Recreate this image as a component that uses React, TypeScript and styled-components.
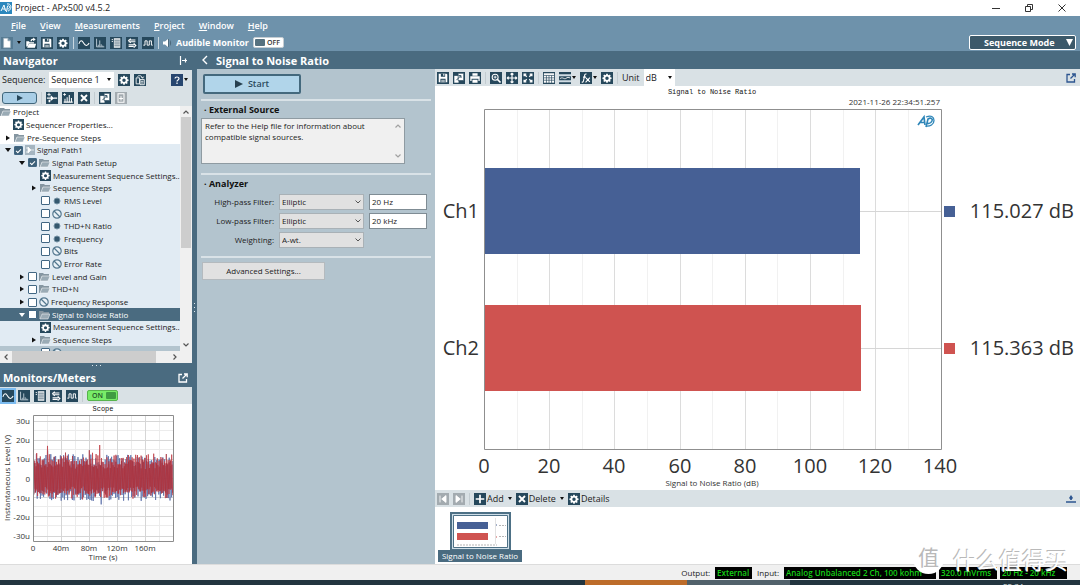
import React from 'react';
import styled, { createGlobalStyle, css } from 'styled-components';

const c = {
  menu: '#6e92ab',
  header: '#4a6b80',
  pale: '#d9e1e5',
  panel: '#b3c4ce',
  tree: '#e1ebf3',
  icon: '#26485c',
  blue: '#466095',
  red: '#cf5350',
};

const GlobalStyle = createGlobalStyle`
  *, *::before, *::after { box-sizing: border-box; }
  body { margin: 0; overflow: hidden; }
  body, button, input, select, textarea {
    font-family: "Open Sans", "Noto Sans", sans-serif;
    font-size: 9px;
    line-height: 12px;
    color: #222;
  }
  button, input, select, textarea { margin: 0; padding: 0; border: 0; border-radius: 0; background: none; }
  button { white-space: nowrap; }
  svg { display: block; flex: none; }
`;

/* ---------- icons ---------- */

type Glyph =
  | 'page' | 'open' | 'save' | 'gear' | 'sine' | 'fft' | 'list' | 'swap' | 'square'
  | 'seqCopy' | 'addStep' | 'addBars' | 'cross' | 'copy' | 'addPage' | 'print' | 'zoom'
  | 'pan' | 'fit' | 'table' | 'graph' | 'fx' | 'plus' | 'first' | 'last';

const gearPath =
  'M6.2 2h1.6l.3 1.3.9.4 1.2-.7 1.1 1.1-.7 1.2.4.9 1.3.3v1.6l-1.3.3-.4.9.7 1.2-1.1 1.1-1.2-.7-.9.4-.3 1.3H6.2l-.3-1.3-.9-.4-1.2.7-1.1-1.1.7-1.2-.4-.9-1.3-.3V6.5l1.3-.3.4-.9-.7-1.2 1.1-1.1 1.2.7.9-.4z';

const glyphs: Record<Glyph, React.ReactNode> = {
  page: <path d="M3 1.500h5l3 3v8H3z M8 1.500v3h3" fill="#fff" stroke="#9fb2bf" strokeWidth=".7" />,
  open: <g fill="#fff"><path d="M1.500 5h3l1 1h5v1.500H4.500L3 11H1.500z" /><path d="M4.500 8H13l-1.500 4.500H2.500z" /><path d="M6.500 5c0-2.500 1-3 3-3V.5l3 2.300-3 2.200V3.500C8.500 3.500 8 4 8 5z" /></g>,
  save: <g><path d="M2 2h9l1 1v9H2z" fill="#fff" /><path d="M4.500 2h5v3.500h-5z M4 8h6v4H4z" fill={c.icon} /><path d="M7.300 2h1.300v2.500H7.300z M5.300 9h1.200v3H5.300z M7.500 9h1.200v3H7.500z" fill="#fff" /></g>,
  gear: <path d={gearPath + 'M7 5.300a2 2 0 1 0 0 4 2 2 0 0 0 0-4z'} fill="#fff" fillRule="evenodd" />,
  sine: <path d="M1 8C2.500 3.500 4.500 3.500 6.500 7s4.500 4 6.500 0" fill="none" stroke="#fff" strokeWidth="1.200" />,
  fft: <path d="M3 2v9.500h9 M5 11V9 M6.700 11V4 M8.400 11V8.500 M10.200 11V10" fill="none" stroke="#dbe6ee" strokeWidth=".9" />,
  list: <g><path d="M4.500 1.500h7.500v11H4.500z" fill="#fff" /><path d="M5 3.700h6.500M5 5.900h6.500M5 8.100h6.500M5 10.300h6.500" stroke={c.icon} strokeWidth=".9" /><path d="M2 3h1.500M2 5.200h1.500" stroke="#fff" /></g>,
  swap: <path d="M3 3.500h8M3 5.500h8M3 9h8M3 11h6 M5.500 2L3 4.500l2.500 2.300M9 7.500l2.500 2.500L9 12.300" fill="none" stroke="#fff" strokeWidth="1.300" />,
  square: <path d="M1.500 9.500h2v-5H6v5h2.500v-5H11v5h1.500" fill="none" stroke="#fff" strokeWidth="1.100" />,
  seqCopy: <g fill="none" stroke="#fff" strokeWidth="1"><path d="M2.500 4.500h4v7h-4z M7 6.500h5v6H7z M8 8.500h3 M8 10.500h3" /><path d="M4 3c2-2 5-1 6 1.500M8.500 3.500L10 5l1.300-2" /></g>,
  addStep: <g fill="#fff"><path d="M1.500 2.500h4v1h-4zM3 1h1v4H3zM1 6.500h5V8H1z" /><path d="M5.500 3.800L9.500 7.200l-4 3.400zM9 6.500h4V8H9zM3 9h2v3H3z" /></g>,
  addBars: <path d="M1.500 3h3M3 1.500v3M3.500 11V8M6 11V6M8.500 11V3.500M11 11V7M2 11.800h10.500" fill="none" stroke="#fff" strokeWidth="1.200" />,
  cross: <path d="M3.500 3.500l7 7M10.500 3.500l-7 7" fill="none" stroke="#fff" strokeWidth="2.200" />,
  copy: <g><path d="M1.500 4.500h5v8h-5z" fill="#fff" /><path d="M6 1.500h6.500v8.500H6z" fill="#fff" stroke={c.icon} strokeWidth=".8" /><path d="M4 9.500L9 4.500M6.500 4.200h2.800V7" fill="none" stroke={c.icon} strokeWidth="1.100" /></g>,
  addPage: <path d="M3.500 2h7v10h-7zM7 5v5M4.800 7.500h4.500" fill="none" stroke="#fff" strokeWidth="1.200" />,
  print: <path d="M4 1.500h6v3H4zM1.500 5h11v5.500H11V8H3v2.500H1.500zM4 9h6v3.500H4z" fill="#fff" />,
  zoom: <g fill="none" stroke="#fff"><circle cx="6" cy="6" r="3.500" strokeWidth="1.200" /><path d="M8.500 8.500L12.300 12.300" strokeWidth="1.900" /><path d="M4.300 6h3.400M6 4.300v3.400" /></g>,
  pan: <path d="M7 1.500v11M1.500 7h11M5.300 3L7 1.500 8.700 3M5.300 11L7 12.500 8.700 11M3 5.300L1.500 7 3 8.700M11 5.300L12.500 7 11 8.700" fill="none" stroke="#fff" strokeWidth="1.400" />,
  fit: <path d="M2.500 5V2.500H5M2.500 2.500l3 3M9 2.500h2.500V5M11.500 2.500l-3 3M2.500 9v2.500H5M2.500 11.500l3-3M9 11.500h2.500V9M11.500 11.500l-3-3" fill="none" stroke="#fff" strokeWidth="1.500" />,
  table: <g><path d="M1 1.500h12v11H1z" fill="#fff" /><path d="M1 4h12M1 6.800h12M1 9.600h12M4 4v9M7 4v9M10 4v9" stroke={c.icon} strokeWidth=".8" /></g>,
  graph: <g><path d="M0 2.500h14v2.500H0zM0 9.500h14V12H0z" fill="#cfdbe3" /><path d="M1 8c3-3 5 1 7-.5s3-1.500 5-.5" fill="none" stroke="#fff" /></g>,
  fx: <path d="M7.500 2.500C6 2 5.500 3 5.200 5L4 10.500c-.3 1.300-1 1.500-2 1.200M3.500 6H7M7 7l4.500 4.500M11.500 6.500L6.500 12" fill="none" stroke="#fff" strokeWidth="1.300" />,
  plus: <path d="M7 2v10M2 7h10" fill="none" stroke="#fff" strokeWidth="2" />,
  first: <path d="M3.500 3v8M10.500 3v8L5.500 7z" fill="#fff" stroke="#fff" />,
  last: <path d="M10.500 3v8M3.500 3v8l5-4z" fill="#fff" stroke="#fff" />,
};

const IconButton = styled.button<{ $bg?: string; $ring?: boolean }>`
  display: grid;
  place-items: center;
  flex: none;
  width: 12px;
  height: 12px;
  background: ${p => p.$bg ?? c.icon};
  ${p => p.$ring && css`outline: 2px solid #7dbcf0;`}
`;

const Icon = ({ g, label, bg, ring }: { g: Glyph; label: string; bg?: string; ring?: boolean }) => (
  <IconButton type="button" aria-label={label} $bg={bg} $ring={ring}>
    <svg width="12" height="12" viewBox="0 0 14 14">{glyphs[g]}</svg>
  </IconButton>
);

const Caret = ({ color = '#111' }: { color?: string }) => (
  <svg width="4" height="3" viewBox="0 0 4 3"><path d="M0 0h4L2 3z" fill={color} /></svg>
);

const Divider = styled.span<{ $color?: string }>`
  flex: none;
  width: 1px;
  height: 12px;
  background: ${p => p.$color ?? '#c3ccd1'};
`;

const Chevron = styled.svg`
  position: absolute;
  right: 3px;
  top: 50%;
  margin-top: -2px;
  pointer-events: none;
`;

/* ---------- page frame ---------- */

const Page = styled.div`
  position: relative;
  display: flex;
  flex-direction: column;
  height: 100vh;
  background: #fff;
  overflow: hidden;
`;

const TitleBar = styled.header`
  display: flex;
  align-items: center;
  justify-content: space-between;
  height: 16px;
  padding-right: 13px;
`;

const AppTitle = styled.div`
  display: flex;
  align-items: center;
  gap: 3px;
`;

const WindowControls = styled.div`
  display: flex;
  gap: 22px;
`;

const WindowButton = styled.button`
  display: grid;
  place-items: center;
  width: 11px;
  height: 12px;
`;

const MenuBar = styled.nav`
  display: flex;
  align-items: center;
  gap: 14px;
  height: 18px;
  padding: 2px 11px 0;
  background: ${c.menu};
`;

const MenuLink = styled.a`
  color: #fff;
  font-weight: 600;
  text-decoration: none;
  &::first-letter { text-decoration: underline; }
`;

const MainToolbar = styled.div`
  display: flex;
  align-items: center;
  justify-content: space-between;
  height: 17px;
  padding: 0 4px 0 1px;
  background: ${c.menu};
`;

const Tools = styled.div<{ $gap?: number }>`
  display: flex;
  align-items: center;
  gap: ${p => p.$gap ?? 4}px;
`;

const Monitor = styled.span`
  color: #fff;
  font-weight: 700;
`;

const Toggle = styled.button<{ $on?: boolean }>`
  display: flex;
  flex-direction: ${p => (p.$on ? 'row-reverse' : 'row')};
  align-items: center;
  justify-content: space-between;
  width: 31px;
  height: 11px;
  padding: 0 ${p => (p.$on ? 1 : 3)}px 0 ${p => (p.$on ? 4 : 1)}px;
  border: 1px solid ${p => (p.$on ? '#57b34d' : '#c5cdd2')};
  border-radius: 2px;
  background: ${p => (p.$on ? '#78ec68' : '#fff')};
  color: ${p => (p.$on ? '#24542a' : '#333')};
  font-size: 7px;
  font-weight: 600;
  line-height: 9px;
  &::before {
    content: '';
    width: 10px;
    height: 7px;
    border-radius: 1px;
    background: ${p => (p.$on ? '#3f9c42' : '#56717f')};
  }
`;

const ModeButton = styled.button`
  display: flex;
  align-items: center;
  justify-content: space-between;
  width: 107px;
  height: 15px;
  padding: 0 2px 0 14px;
  border: 1px solid #fff;
  border-radius: 2px;
  background: #3c596a;
  color: #fff;
  font-weight: 700;
`;

const Body = styled.main`
  display: grid;
  grid-template-columns: 197px minmax(0, 1fr);
  flex: 1;
  min-height: 0;
  background: ${c.header};
`;

const Side = styled.aside`
  display: grid;
  grid-template-columns: minmax(0, 1fr) 5px;
  min-height: 0;
`;

const SideColumn = styled.div`
  display: flex;
  flex-direction: column;
  min-height: 0;
`;

const Grip = styled.div<{ $across?: boolean }>`
  display: flex;
  flex-direction: ${p => (p.$across ? 'row' : 'column')};
  align-items: center;
  justify-content: center;
  gap: 3px;
  flex: none;
  min-height: 5px;
  background: ${c.header};
  & > i { width: 1px; height: 1px; background: #dfe8ee; }
`;

const PaneHeader = styled.h2`
  display: flex;
  align-items: center;
  justify-content: space-between;
  flex: none;
  height: 19px;
  margin: 0;
  padding: 0 4px 0 3px;
  background: ${c.header};
  color: #fff;
  font-size: 11px;
  font-weight: 700;
  line-height: 15px;
`;

const SequenceRow = styled.div<{ $short?: boolean }>`
  display: flex;
  align-items: center;
  gap: 4px;
  flex: none;
  height: ${p => (p.$short ? 17 : 19)}px;
  padding: 0 4px 0 2px;
  background: ${c.pale};
`;

const SequencePick = styled.span`
  position: relative;
  width: 65px;
  & > select {
    display: block;
    width: 100%;
    height: 16px;
    padding-left: 2px;
    appearance: none;
    background: #fff;
  }
`;

const Push = styled.span`
  margin-left: auto;
`;

const RunButton = styled.button`
  display: grid;
  place-items: center;
  width: 35px;
  height: 12px;
  border: 1px solid #41677c;
  border-radius: 3px;
  background: #a9cee6;
`;

/* ---------- tree ---------- */

const TreeFrame = styled.div`
  display: grid;
  grid-template-columns: minmax(0, 1fr) 12px;
  flex: 1;
  min-height: 0;
  background: #fff;
`;

const TreeView = styled.div`
  min-height: 0;
  overflow: hidden;
`;

const TreeList = styled.ul`
  display: grid;
  grid-template-rows: repeat(20, minmax(0, 1fr));
  height: 253px;
  margin: 0;
  padding: 0;
  list-style: none;
  font-size: 8px;
`;

const TreeItem = styled.li<{ $indent: number; $tone: 'plain' | 'tint' | 'selected' | 'group' }>`
  display: flex;
  align-items: center;
  gap: 2px;
  min-width: 0;
  padding-left: ${p => p.$indent}px;
  white-space: nowrap;
  background: ${p => ({ plain: '#fff', tint: c.tree, selected: c.header, group: c.panel })[p.$tone]};
  color: ${p => (p.$tone === 'selected' ? '#fff' : '#222')};
`;

const Check = styled.input`
  appearance: none;
  display: grid;
  place-items: center;
  flex: none;
  width: 9px;
  height: 9px;
  border: 1px solid #426783;
  border-radius: 1px;
  background: #fff;
  &:checked { background: #3d6078; }
  &:checked::after {
    content: '';
    width: 5px;
    height: 3px;
    border: solid #fff;
    border-width: 0 0 1px 1px;
    transform: rotate(-45deg);
  }
`;

const Arrow = styled.button`
  display: grid;
  place-items: center;
  flex: none;
  width: 8px;
  height: 8px;
`;

const Folder = () => (
  <svg width="11" height="10" viewBox="0 0 11 10">
    <path d="M0 1h4l1 1h5v2H3L1 9H0z" fill="#8596a1" />
    <path d="M3 4h8L9 9H1z" fill="#9aabb5" stroke="#fff" strokeWidth=".5" />
  </svg>
);
const Dot = () => (
  <svg width="10" height="8" viewBox="0 0 10 8"><circle cx="5" cy="4" r="3" fill="#35586e" stroke="#7793a5" /></svg>
);
const Ban = () => (
  <svg width="10" height="10" viewBox="0 0 10 10">
    <circle cx="5" cy="5" r="4.200" fill="#e9f1f7" stroke="#54788f" strokeWidth="1.200" />
    <path d="M2 2l6 6" stroke="#54788f" strokeWidth="1.200" />
  </svg>
);
const GearTile = () => (
  <svg width="11" height="11" viewBox="0 0 14 14"><path d="M0 0h14v14H0z" fill={c.icon} />{glyphs.gear}</svg>
);
const PathTile = () => (
  <svg width="10" height="10" viewBox="0 0 10 10">
    <path d="M0 0h10v10H0z" fill="#a5b5c0" /><path d="M1 3h2M1 7h2M3 2v6l3-3zM6 5h3" fill="#fff" stroke="#fff" strokeWidth=".7" />
  </svg>
);

type Kind = 'folder' | 'dot' | 'ban' | 'gear' | 'path';
const kinds: Record<Kind, React.ReactNode> = {
  folder: <Folder />, dot: <Dot />, ban: <Ban />, gear: <GearTile />, path: <PathTile />,
};

interface Node {
  text: string;
  indent: number;
  kind: Kind;
  arrow?: 'open' | 'shut';
  check?: boolean;
  tone?: 'plain' | 'tint' | 'selected' | 'group';
}

const nodes: Node[] = [
  { text: 'Project', indent: 0, kind: 'folder', tone: 'plain' },
  { text: 'Sequencer Properties...', indent: 13, kind: 'gear', tone: 'plain' },
  { text: 'Pre-Sequence Steps', indent: 4, kind: 'folder', arrow: 'shut', tone: 'plain' },
  { text: 'Signal Path1', indent: 4, kind: 'path', arrow: 'open', check: true },
  { text: 'Signal Path Setup', indent: 18, kind: 'folder', arrow: 'open', check: true },
  { text: 'Measurement Sequence Settings..', indent: 40, kind: 'gear' },
  { text: 'Sequence Steps', indent: 30, kind: 'folder', arrow: 'shut' },
  { text: 'RMS Level', indent: 41, kind: 'dot', check: false },
  { text: 'Gain', indent: 41, kind: 'ban', check: false },
  { text: 'THD+N Ratio', indent: 41, kind: 'dot', check: false },
  { text: 'Frequency', indent: 41, kind: 'dot', check: false },
  { text: 'Bits', indent: 41, kind: 'ban', check: false },
  { text: 'Error Rate', indent: 41, kind: 'ban', check: false },
  { text: 'Level and Gain', indent: 18, kind: 'folder', arrow: 'shut', check: false },
  { text: 'THD+N', indent: 18, kind: 'folder', arrow: 'shut', check: false },
  { text: 'Frequency Response', indent: 18, kind: 'ban', arrow: 'shut', check: false },
  { text: 'Signal to Noise Ratio', indent: 18, kind: 'folder', arrow: 'open', check: false, tone: 'selected' },
  { text: 'Measurement Sequence Settings..', indent: 40, kind: 'gear' },
  { text: 'Sequence Steps', indent: 30, kind: 'folder', arrow: 'shut' },
  { text: 'Signal to Noise Ratio', indent: 41, kind: 'ban', check: false, tone: 'group' },
];

const TreeRow = ({ node, id }: { node: Node; id: string }) => {
  const ink = node.tone === 'selected' ? '#fff' : '#111';
  return (
    <TreeItem $indent={node.indent} $tone={node.tone ?? 'tint'}>
      {node.arrow && (
        <Arrow type="button" aria-label={`Toggle ${node.text}`}>
          <svg width="6" height="6" viewBox="0 0 6 6">
            <path d={node.arrow === 'open' ? 'M0 1h6L3 5z' : 'M1 0.500v5l4-2.500z'} fill={ink} />
          </svg>
        </Arrow>
      )}
      {node.check !== undefined && <Check id={id} type="checkbox" defaultChecked={node.check} />}
      {kinds[node.kind]}
      {node.check !== undefined ? <label htmlFor={id}>{node.text}</label> : <span>{node.text}</span>}
    </TreeItem>
  );
};

const ScrollTrack = styled.div<{ $across?: boolean }>`
  display: flex;
  flex-direction: ${p => (p.$across ? 'row' : 'column')};
  align-items: center;
  justify-content: space-between;
  flex: none;
  min-height: 12px;
  padding: ${p => (p.$across ? '0 14px 0 3px' : '3px 0')};
  background: #f0f0f0;
`;

const Thumb = styled.div<{ $across?: boolean }>`
  align-self: stretch;
  flex: ${p => (p.$across ? '0 1 144px' : '0 1 131px')};
  margin: ${p => (p.$across ? '0 auto 0 3px' : '2px 1px auto')};
  background: #cdcdcd;
`;

const Tip = ({ d }: { d: string }) => (
  <svg width="6" height="6" viewBox="0 0 6 6"><path d={d} fill="none" stroke="#555" strokeWidth="1.200" /></svg>
);
const tipUp = 'M0.500 4.500L3 2l2.500 2.500';
const tipDown = 'M0.500 1.500L3 4l2.500-2.500';
const tipLeft = 'M4.500 .5L2 3l2.500 2.500';
const tipRight = 'M1.500 .5L4 3 1.500 5.500';

/* ---------- scope ---------- */

const MeterTools = styled.div`
  display: flex;
  align-items: center;
  gap: 4px;
  flex: none;
  height: 17px;
  padding: 0 2px;
  background: ${c.pale};
`;

const ScopeFrame = styled.div`
  flex: none;
  height: 160px;
  background: #fff;
`;

const ChartSvg = styled.svg`
  width: 100%;
  height: 100%;
  text { font-family: "Open Sans", "Noto Sans", sans-serif; fill: #333; }
  .mono { font-family: "Liberation Mono", monospace; font-size: 7px; fill: #111; }
`;

const noise = (seed: number, up: number, down: number, step: number) => {
  let s = seed;
  const rnd = () => {
    s = (s * 16807) % 2147483647;
    return s / 2147483647;
  };
  for (let i = 0; i < 5; i++) rnd();
  let d = '';
  for (let i = 0; i * step <= 139; i++) {
    const spike = rnd() > 0.93 ? 12 * rnd() : 0;
    const reach = 0.5 + 0.5 * rnd();
    const y = i % 2 ? 74 - reach * up - spike : 74 + reach * down + spike * 0.7;
    d += `${i ? 'L' : 'M'}${(34 + i * step).toFixed(1)} ${y.toFixed(1)}`;
  }
  return d;
};

const Scope = () => (
  <ChartSvg viewBox="0 0 192 160" role="img" aria-label="Scope">
    <text x="103" y="7" textAnchor="middle" className="mono">Scope</text>
    <g stroke="#ececec">
      {[47.5, 75.5, 103.5, 131.5, 159.5].map(x => <path key={x} d={`M${x} 12v126`} />)}
      {[26.5, 45.5, 64.5, 83.5, 102.5, 121.5].map(y => <path key={y} d={`M33 ${y}h140`} />)}
    </g>
    <g stroke="#d6d6d6">
      {[61.5, 89.5, 117.5, 145.5].map(x => <path key={x} d={`M${x} 12v126`} />)}
      {[17.5, 36.5, 55.5, 74.5, 93.5, 112.5, 132.5].map(y => <path key={y} d={`M33 ${y}h140`} />)}
    </g>
    <path d={noise(71, 24, 23, 0.8)} fill="none" stroke="#5a6fa8" strokeWidth=".8" />
    <path d={noise(1234, 24, 21, 0.9)} fill="none" stroke="#c2424a" strokeWidth=".8" />
    <path d={noise(998, 18, 17, 0.7)} fill="none" stroke="#a8303e" strokeWidth=".7" />
    <path d="M33.500 11.500h140v126h-140z" fill="none" stroke="#8c8c8c" />
    <g fontSize="8" textAnchor="end">
      {['30u', '20u', '10u', '0', '-10u', '-20u', '-30u'].map((t, i) => (
        <text key={t} x="30" y={20 + Math.round(i * 19.2)}>{t}</text>
      ))}
    </g>
    <g fontSize="8" textAnchor="middle">
      {['0', '40m', '80m', '120m', '160m'].map((t, i) => <text key={t} x={33 + i * 28} y="147">{t}</text>)}
      <text x="103" y="156">Time (s)</text>
      <text transform="translate(10 74) rotate(-90)">Instantaneous Level (V)</text>
    </g>
  </ChartSvg>
);

/* ---------- measurement ---------- */

const Work = styled.section`
  display: flex;
  flex-direction: column;
  min-width: 0;
  min-height: 0;
`;

const WorkHeader = styled(PaneHeader)`
  justify-content: flex-start;
  gap: 8px;
  padding-left: 5px;
  height: 18px;
`;

const WorkColumns = styled.div`
  display: grid;
  grid-template-columns: 238px minmax(0, 1fr);
  flex: 1;
  min-height: 0;
`;

const Settings = styled.form`
  display: flex;
  flex-direction: column;
  align-items: stretch;
  padding: 5px 4px 0 4px;
  background: ${c.panel};
`;

const StartButton = styled.button`
  display: flex;
  align-items: center;
  justify-content: center;
  gap: 5px;
  width: 98px;
  height: 20px;
  margin: 0 0 5px 2px;
  border: 2px solid #44697d;
  border-radius: 2px;
  background: #b1d5ea;
  color: #2b4a5d;
  font-weight: 600;
`;

const Group = styled.fieldset<{ $tail: number }>`
  min-width: 0;
  margin: 0;
  padding: 0 0 ${p => p.$tail}px;
  border: 0;
  border-top: 2px solid #d9e2e7;
`;

const GroupTitle = styled.h3`
  margin: 0;
  padding: 2px 0 2px 3px;
  color: #111;
  font-size: 9px;
  font-weight: 700;
  line-height: 13px;
`;

const Note = styled.div`
  display: flex;
  width: 204px;
  height: 46px;
  border: 1px solid #8f9ba2;
  background: #f0f0f0;
  & > textarea {
    flex: 1;
    padding: 1px 3px;
    resize: none;
    overflow: hidden;
    font-size: 8px;
    line-height: 11px;
  }
`;

const NoteScroll = styled.div`
  display: flex;
  flex-direction: column;
  align-items: center;
  justify-content: space-between;
  width: 13px;
  padding: 4px 0;
  opacity: 0.5;
`;

const Field = styled.div`
  display: grid;
  grid-template-columns: 73px 85px 58px;
  align-items: center;
  column-gap: 5px;
  height: 19px;
  & > label { text-align: right; font-size: 8px; }
`;

const Pick = styled.span`
  position: relative;
  & > select {
    display: block;
    width: 100%;
    height: 16px;
    padding-left: 2px;
    appearance: none;
    border: 1px solid #a9b1b6;
    background: #e1e1e1;
    font-size: 8px;
  }
`;

const TextField = styled.input`
  width: 100%;
  height: 16px;
  padding: 0 2px;
  border: 1px solid #7f8c94;
  background: #fff;
  font-size: 8px;
`;

const Advanced = styled.button`
  width: 123px;
  height: 18px;
  margin: 4px 0 0 1px;
  border: 1px solid #b4babe;
  background: #e1e1e1;
  font-size: 8px;
`;

const Results = styled.div`
  display: flex;
  flex-direction: column;
  min-width: 0;
  min-height: 0;
  background: #fff;
`;

const ResultTools = styled.div`
  display: flex;
  align-items: center;
  gap: 4px;
  flex: none;
  height: 17px;
  padding: 0 4px 0 2px;
  background: ${c.pale};
`;

const UnitPick = styled.span`
  position: relative;
  width: 31px;
  height: 17px;
  & > select {
    display: block;
    width: 100%;
    height: 17px;
    padding-left: 2px;
    appearance: none;
    background: #fff;
  }
`;

const ChartFrame = styled.div`
  flex: 1;
  min-height: 0;
`;

const LabelButton = styled.button`
  display: flex;
  align-items: center;
`;

const Thumbs = styled.div`
  flex: none;
  height: 57px;
  padding: 5px 3px 0;
`;

const ThumbCard = styled.figure`
  display: flex;
  flex-direction: column;
  align-items: center;
  width: 84px;
  margin: 0;
  & > figcaption {
    width: 100%;
    background: ${c.header};
    color: #fff;
    font-size: 8px;
    text-align: center;
    white-space: nowrap;
  }
`;

const ThumbFrame = styled.div`
  padding: 1px;
  border: 2px solid #4d7085;
  border-bottom-width: 1px;
  background: #cfdfe9;
`;

const bars = [
  { name: 'Ch1', value: '115.027 dB', y: 82, width: 375, color: c.blue },
  { name: 'Ch2', value: '115.363 dB', y: 219, width: 376, color: c.red },
];

const SnrChart = () => (
  <ChartSvg viewBox="-1 0 645 404" role="img" aria-label="Signal to Noise Ratio">
    <text x="276" y="8" textAnchor="middle" className="mono">Signal to Noise Ratio</text>
    <text x="504" y="19" textAnchor="end" fontSize="8">2021-11-26 22:34:51.257</text>
    <g strokeWidth="1">
      {[1, 2, 3, 4, 5, 6, 7, 8, 9, 10, 11, 12, 13].map(i => (
        <path key={i} d={`M${Math.round(48 + i * 32.6) + 0.5} 24v339`} stroke={i % 2 ? '#f1f1f1' : '#dcdcdc'} />
      ))}
      <path d="M49 125.500h456M49 262.500h456" stroke="#d6d6d6" />
    </g>
    {bars.map(b => (
      <g key={b.name}>
        <rect x="49" y={b.y} width={b.width} height="86" fill={b.color} />
        <rect x="508" y={b.y + 38} width="11" height="11" fill={b.color} />
        <text x="43" y={b.y + 50} textAnchor="end" fontSize="20">{b.name}</text>
        <text x="638" y={b.y + 50} textAnchor="end" fontSize="20">{b.value}</text>
      </g>
    ))}
    <path d="M48.500 23.500h457v340h-457z" fill="none" stroke="#8f8f8f" />
    <g fontSize="20" textAnchor="middle">
      {[0, 20, 40, 60, 80, 100, 120, 140].map(v => (
        <text key={v} x={48 + Math.round(v * 3.26)} y="387">{v}</text>
      ))}
    </g>
    <text x="276" y="400" textAnchor="middle" fontSize="8">Signal to Noise Ratio (dB)</text>
    <g fill="none" stroke="#2f86b8">
      <path d="M482 39l6-8 1 8M484 36.500h5" strokeWidth="1.700" />
      <path d="M490 41l2-8c3-2 5 0 4 2s-3 3-5 2" strokeWidth="1.600" />
      <path d="M490 31c5-2 8-.5 8 3.500s-4 6-8 5.500" strokeWidth="1.300" />
    </g>
  </ChartSvg>
);

const Popout = ({ color = '#fff' }: { color?: string }) => (
  <svg width="10" height="10" viewBox="0 0 10 10">
    <path d="M4 1.500H1v7.500h7.500V6M6 1h3.200v3.200M9 1L4.500 5.500" fill="none" stroke={color} strokeWidth="1.300" />
  </svg>
);

/* ---------- status ---------- */

const StatusBar = styled.footer`
  display: flex;
  align-items: center;
  justify-content: flex-end;
  gap: 3px;
  flex: none;
  height: 16px;
  padding-right: 13px;
  border-top: 1px solid #dcdcdc;
  background: #f0f0f0;
  white-space: nowrap;
`;

const StatusName = styled.span`
  margin: 0 2px;
  font-size: 8px;
`;

const Readout = styled.output<{ $width: number }>`
  min-width: ${p => p.$width}px;
  padding: 0 2px;
  background: #000;
  color: #16d016;
  font-size: 8px;
  font-weight: 600;
`;

const Taskbar = styled.div`
  display: grid;
  grid-template-columns: 585fr 102fr 103fr 213fr 77fr;
  flex: none;
  height: 5px;
  overflow: hidden;
  background: #22353f;
  color: #dfe5e8;
  font-size: 8px;
  & > :nth-child(2) { background: #bd6c2a; }
  & > :nth-child(3) { background: #52626b; }
`;

const Watermark = styled.div`
  position: absolute;
  right: 12px;
  bottom: 11px;
  display: flex;
  align-items: center;
  gap: 9px;
  color: #fff;
  font-family: "Noto Sans CJK SC", sans-serif;
  font-size: 23px;
  line-height: 30px;
  text-shadow: -1px -1px 0 #b9b9b9;
`;

const Seal = styled.span`
  display: grid;
  place-items: start center;
  width: 31px;
  height: 31px;
  border-radius: 50%;
  background: #fff;
  color: #b9b9b9;
  font-size: 21px;
  line-height: 26px;
  text-shadow: none;
`;

const meterIcons: [Glyph, string][] = [
  ['sine', 'Scope'], ['fft', 'FFT'], ['list', 'Meters'], ['swap', 'Transfer'], ['square', 'Digital'],
];

export default function App() {
  return (
    <Page>
      <GlobalStyle />
      <TitleBar>
        <AppTitle>
          <svg width="12" height="12" viewBox="0 0 12 12">
            <path d="M0 0h12v12H0z" fill="#2b87bd" />
            <path d="M1 9l3-6 1.500 6M2.500 7h3M6.500 10l1-6c3-1 3 3 0 3M7 2c5-1 5 6 1 7" fill="none" stroke="#fff" />
          </svg>
          <span>Project - APx500 v4.5.2</span>
        </AppTitle>
        <WindowControls>
          <WindowButton type="button" aria-label="Minimize">
            <svg width="8" height="8"><path d="M0 4.500h8" stroke="#333" /></svg>
          </WindowButton>
          <WindowButton type="button" aria-label="Restore">
            <svg width="8" height="8"><path d="M.5 2.500h5v5h-5zM2.500 2.500v-2h5v5h-2" fill="none" stroke="#333" /></svg>
          </WindowButton>
          <WindowButton type="button" aria-label="Close">
            <svg width="8" height="8"><path d="M.5 .5l7 7M7.500 .5l-7 7" stroke="#333" /></svg>
          </WindowButton>
        </WindowControls>
      </TitleBar>
      <MenuBar>
        {['File', 'View', 'Measurements', 'Project', 'Window', 'Help'].map(m => (
          <MenuLink key={m} href={`#${m}`}>{m}</MenuLink>
        ))}
      </MenuBar>
      <MainToolbar>
        <Tools>
          <Icon g="page" label="New" bg="#557a92" />
          <Caret />
          <Icon g="open" label="Open" />
          <Icon g="save" label="Save" />
          <Icon g="gear" label="Settings" />
          <Divider $color="#c9d7e0" />
          {meterIcons.map(([g, label]) => <Icon key={g} g={g} label={label} />)}
          <Divider $color="#c9d7e0" />
          <svg width="9" height="10" viewBox="0 0 9 10">
            <path d="M0 3.500h2L5 1v8L2 6.500H0z" fill="#fff" /><path d="M5 1l1 0v8H5zM7 2c1.500 2 1.500 4 0 6" fill="#4d697b" />
          </svg>
          <Monitor>Audible Monitor</Monitor>
          <Toggle type="button" aria-pressed="false">OFF</Toggle>
        </Tools>
        <ModeButton type="button">
          Sequence Mode
          <svg width="7" height="7"><path d="M0 0h7L3.500 7z" fill="#fff" /></svg>
        </ModeButton>
      </MainToolbar>
      <Body>
        <Side>
          <SideColumn>
            <PaneHeader>
              Navigator
              <svg width="9" height="9" viewBox="0 0 9 9">
                <path d="M1.500 0v9M3 4.500h5M6.500 2.500v4" stroke="#fff" strokeWidth="1.200" fill="none" />
              </svg>
            </PaneHeader>
            <SequenceRow>
              <label htmlFor="sequence">Sequence:</label>
              <SequencePick>
                <select id="sequence"><option>Sequence 1</option></select>
                <Chevron width="4" height="3"><path d="M0 0h4L2 3z" fill="#111" /></Chevron>
              </SequencePick>
              <Icon g="gear" label="Sequence settings" />
              <Icon g="seqCopy" label="Copy sequence" />
              <Push />
              <Tools $gap={1}>
                <IconButton type="button" aria-label="Help" $bg="#27466f">
                  <svg width="10" height="10" viewBox="0 0 10 10">
                    <path d="M3 3.500C3 1.500 7 1.500 7 3.500 7 5 5 4.800 5 6.500M5 7.500V9" fill="none" stroke="#fff" strokeWidth="1.200" />
                  </svg>
                </IconButton>
                <Caret />
              </Tools>
            </SequenceRow>
            <SequenceRow $short>
              <RunButton type="button" aria-label="Run">
                <svg width="6" height="6"><path d="M0 0v6l6-3z" fill="#27475a" /></svg>
              </RunButton>
              <Divider />
              <Icon g="addStep" label="Add step" />
              <Icon g="addBars" label="Add measurement" />
              <Icon g="cross" label="Remove" />
              <Divider />
              <Icon g="copy" label="Copy" />
              <Icon g="addPage" label="Paste" bg="#a3abb0" />
            </SequenceRow>
            <TreeFrame>
              <TreeView>
                <TreeList>
                  {nodes.map((n, i) => <TreeRow key={i} id={`node-${i}`} node={n} />)}
                </TreeList>
              </TreeView>
              <ScrollTrack><Tip d={tipUp} /><Thumb /><Tip d={tipDown} /></ScrollTrack>
            </TreeFrame>
            <ScrollTrack $across><Tip d={tipLeft} /><Thumb $across /><Tip d={tipRight} /></ScrollTrack>
            <Grip $across><i /><i /><i /></Grip>
            <PaneHeader>Monitors/Meters<Popout /></PaneHeader>
            <MeterTools>
              {meterIcons.map(([g, label], i) => <Icon key={g} g={g} label={label} ring={i === 0} />)}
              <Divider />
              <Toggle type="button" aria-pressed="true" $on>ON</Toggle>
            </MeterTools>
            <ScopeFrame><Scope /></ScopeFrame>
          </SideColumn>
          <Grip><i /><i /><i /></Grip>
        </Side>
        <Work>
          <WorkHeader>
            <svg width="6" height="10" viewBox="0 0 6 10"><path d="M5 1L1 5l4 4" fill="none" stroke="#fff" strokeWidth="1.400" /></svg>
            Signal to Noise Ratio
          </WorkHeader>
          <WorkColumns>
            <Settings onSubmit={e => e.preventDefault()}>
              <StartButton type="button">
                <svg width="8" height="8"><path d="M0 0v8l8-4z" fill="#27404f" /></svg>
                Start
              </StartButton>
              <Group $tail={9}>
                <GroupTitle>· External Source</GroupTitle>
                <Note>
                  <textarea
                    readOnly
                    aria-label="External Source"
                    value={'Refer to the Help file for information about\ncompatible signal sources.'}
                  />
                  <NoteScroll><Tip d={tipUp} /><Tip d={tipDown} /></NoteScroll>
                </Note>
              </Group>
              <Group $tail={7}>
                <GroupTitle>· Analyzer</GroupTitle>
                {[
                  ['High-pass Filter:', 'Elliptic', '20 Hz'],
                  ['Low-pass Filter:', 'Elliptic', '20 kHz'],
                  ['Weighting:', 'A-wt.', ''],
                ].map(([label, option, value]) => (
                  <Field key={label}>
                    <label htmlFor={label}>{label}</label>
                    <Pick>
                      <select id={label}><option>{option}</option></select>
                      <Chevron width="6" height="4"><path d="M.5 .5L3 3l2.500-2.500" fill="none" stroke="#555" /></Chevron>
                    </Pick>
                    {value && <TextField aria-label={`${label} frequency`} defaultValue={value} />}
                  </Field>
                ))}
              </Group>
              <Group $tail={0}>
                <Advanced type="button">Advanced Settings...</Advanced>
              </Group>
            </Settings>
            <Results>
              <ResultTools>
                <Icon g="save" label="Save graph" />
                <Icon g="copy" label="Copy graph" />
                <Icon g="print" label="Print" />
                <Divider />
                <Icon g="zoom" label="Zoom" />
                <Icon g="pan" label="Pan" />
                <Icon g="fit" label="Fit" />
                <Divider />
                <Icon g="table" label="Table" />
                <Tools $gap={1}><Icon g="graph" label="Graph" /><Caret /></Tools>
                <Tools $gap={1}><Icon g="fx" label="Function" /><Caret /></Tools>
                <Icon g="gear" label="Graph settings" />
                <Divider />
                <label htmlFor="unit">Unit</label>
                <UnitPick>
                  <select id="unit"><option>dB</option></select>
                  <Chevron width="4" height="3"><path d="M0 0h4L2 3z" fill="#111" /></Chevron>
                </UnitPick>
                <Push />
                <Popout color="#2d5590" />
              </ResultTools>
              <ChartFrame><SnrChart /></ChartFrame>
              <ResultTools>
                <Icon g="first" label="First" bg="#a3abb0" />
                <Icon g="last" label="Last" bg="#a3abb0" />
                <Divider />
                <Tools $gap={1}><Icon g="plus" label="Add result" /><LabelButton type="button">Add</LabelButton></Tools>
                <Caret />
                <Tools $gap={1}><Icon g="cross" label="Delete result" /><LabelButton type="button">Delete</LabelButton></Tools>
                <Caret />
                <Tools $gap={1}><Icon g="gear" label="Result details" /><LabelButton type="button">Details</LabelButton></Tools>
                <Push />
                <svg width="10" height="8" viewBox="0 0 10 8">
                  <path d="M0 7h10M5 5V3" stroke="#2d5590" strokeWidth="1.400" /><path d="M3 3l2-3 2 3-2 2z" fill="#2d5590" />
                </svg>
              </ResultTools>
              <Thumbs>
                <ThumbCard>
                  <ThumbFrame>
                    <svg width="55" height="33" viewBox="0 0 55 33">
                      <path d="M.5 .5h54v32H.5z" fill="#fff" stroke="#4d7085" />
                      <path d="M42.500 3v26" stroke="#e2e2e2" />
                      <path d="M4 7h31v7H4z" fill={c.blue} />
                      <path d="M4 18h31v7H4z" fill={c.red} />
                      <path d="M43 10h1" stroke={c.blue} /><path d="M43 22h1" stroke={c.red} />
                      <path d="M46 10.500h7M46 21.500h7M4 30h40" stroke="#b5b5b5" strokeDasharray="2 1" />
                    </svg>
                  </ThumbFrame>
                  <figcaption>Signal to Noise Ratio</figcaption>
                </ThumbCard>
              </Thumbs>
            </Results>
          </WorkColumns>
        </Work>
      </Body>
      <StatusBar>
        <StatusName>Output:</StatusName>
        <Readout $width={37}>External</Readout>
        <StatusName>Input:</StatusName>
        <Readout $width={152}>Analog Unbalanced 2 Ch, 100 kohm</Readout>
        <Readout $width={58}>320.0 mVrms</Readout>
        <Readout $width={67}>20 Hz - 20 kHz</Readout>
      </StatusBar>
      <Taskbar><i /><i /><i /><i /><span>22:34</span></Taskbar>
      <Watermark><Seal>值</Seal>什么值得买</Watermark>
    </Page>
  );
}
